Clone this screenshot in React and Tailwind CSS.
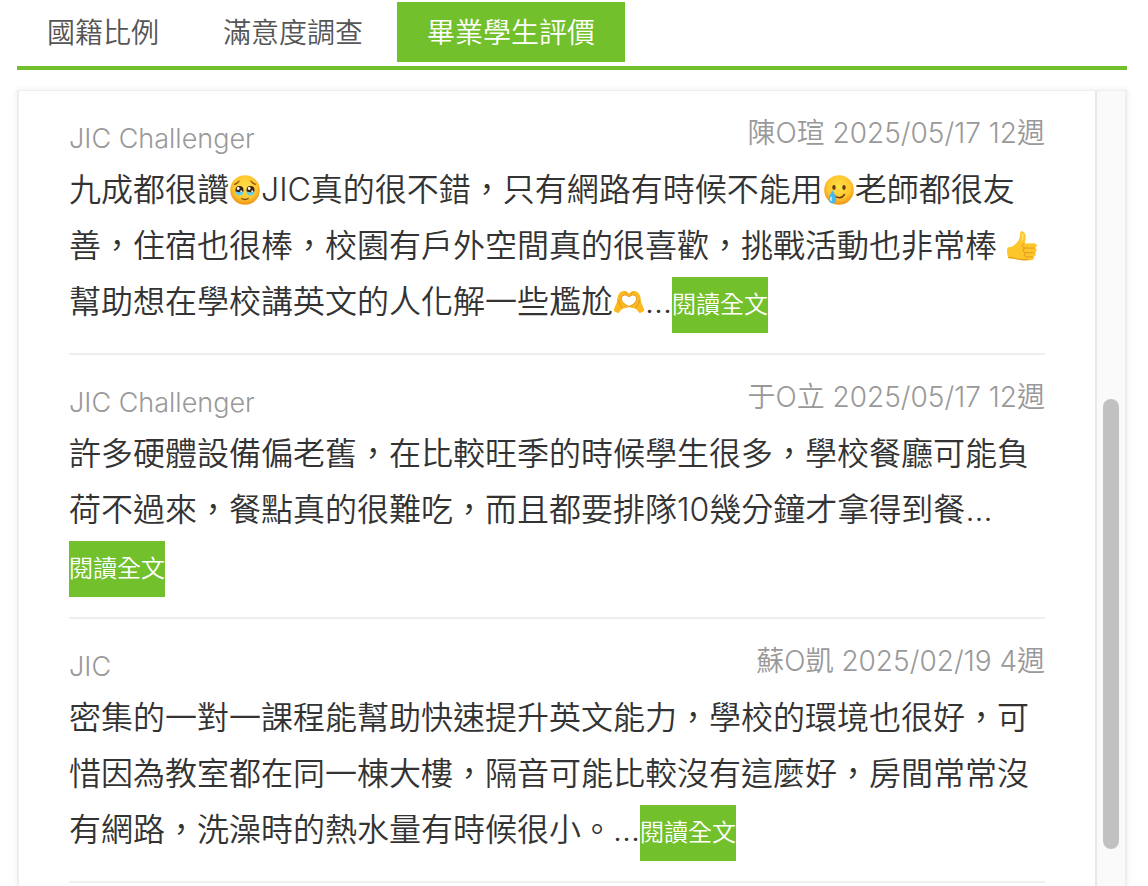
import { useState } from "react";

const TABS = ["國籍比例", "滿意度調查", "畢業學生評價"];

const REVIEWS = [
  {
    course: "JIC Challenger",
    author: "陳O瑄",
    date: "2025/05/17",
    weeks: "12週",
    content: (
      <>
        九成都很讚
        <TearyFace />
        JIC真的很不錯，只有網路有時候不能用
        <SmilingTear />
        老師都很友善，住宿也很棒，校園有戶外空間真的很喜歡，挑戰活動也非常棒{" "}
        <ThumbsUp />
        幫助想在學校講英文的人化解一些尷尬
        <HeartHands />
      </>
    ),
  },
  {
    course: "JIC Challenger",
    author: "于O立",
    date: "2025/05/17",
    weeks: "12週",
    content:
      "許多硬體設備偏老舊，在比較旺季的時候學生很多，學校餐廳可能負荷不過來，餐點真的很難吃，而且都要排隊10幾分鐘才拿得到餐",
  },
  {
    course: "JIC",
    author: "蘇O凱",
    date: "2025/02/19",
    weeks: "4週",
    content:
      "密集的一對一課程能幫助快速提升英文能力，學校的環境也很好，可惜因為教室都在同一棟大樓，隔音可能比較沒有這麼好，房間常常沒有網路，洗澡時的熱水量有時候很小。",
  },
];

function Emoji({ label, children }) {
  return (
    <svg
      role="img"
      aria-label={label}
      viewBox="0 0 32 32"
      className="mb-1 inline-block size-8 align-middle"
    >
      {children}
    </svg>
  );
}

function FaceBase({ id }) {
  return (
    <>
      <defs>
        <radialGradient id={id} cx="50%" cy="40%" r="60%">
          <stop offset="0" stopColor="#ffe04a" />
          <stop offset="0.65" stopColor="#ffc72e" />
          <stop offset="1" stopColor="#ee9418" />
        </radialGradient>
      </defs>
      <circle cx="16" cy="16" r="14.8" fill={`url(#${id})`} />
    </>
  );
}

function TearyFace() {
  return (
    <Emoji label="感動">
      <FaceBase id="teary-face" />
      <path
        d="M5.500 10.300q3-.8 4.500-3.200M26.500 10.300q-3-.8-4.500-3.200"
        fill="none"
        stroke="#8b5212"
        strokeWidth="1.200"
        strokeLinecap="round"
      />
      <ellipse cx="10.500" cy="16" rx="4" ry="3.900" fill="#3c2415" />
      <ellipse cx="21.500" cy="16" rx="4" ry="3.900" fill="#3c2415" />
      <path
        d="M6.500 17.200q4 2 8 0-.3 4.300-4 4.300t-4-4.300zM17.500 17.200q4 2 8 0-.3 4.300-4 4.300t-4-4.300z"
        fill="#63cfe8"
      />
      <circle cx="9.200" cy="14.500" r="1.400" fill="#fff" />
      <circle cx="20.200" cy="14.500" r="1.400" fill="#fff" />
      <circle cx="12.200" cy="17.200" r=".9" fill="#fff" />
      <circle cx="23.200" cy="17.200" r=".9" fill="#fff" />
      <path
        d="M12.800 24.500q3.200 2 6.400 0"
        fill="none"
        stroke="#7a430e"
        strokeWidth="1.400"
        strokeLinecap="round"
      />
    </Emoji>
  );
}

function SmilingTear() {
  return (
    <Emoji label="含淚微笑">
      <FaceBase id="smiling-tear" />
      <ellipse cx="11" cy="13.5" rx="1.7" ry="2.4" fill="#6b3a0c" />
      <ellipse cx="21" cy="13.5" rx="1.7" ry="2.4" fill="#6b3a0c" />
      <path
        d="M11 21.500q6.500 5 10.500-1"
        fill="none"
        stroke="#6b3a0c"
        strokeWidth="1.5"
        strokeLinecap="round"
      />
      <path
        d="M9.500 16.500q4 5.800 3.700 9-.5 4-3.700 4t-3.700-4q-.2-3.200 3.700-9z"
        fill="#45b9f0"
      />
      <path d="M8.400 22.800q-1.400 2.400.2 4" fill="none" stroke="#d3f2fd" strokeWidth="1.500" />
    </Emoji>
  );
}

function ThumbsUp() {
  return (
    <Emoji label="讚">
      <path
        d="M1.5 17.5q4.5-.6 7-2.6 4.2-3.6 5.3-7.4.4-2.2.3-4.6.1-2.2 2.3-1.6 3.6 1.3 3.2 6.8-.2 3-1 5.4l9.6-.3q2.6.2 2.5 2.3 0 2-1.8 2.4 2 .6 1.8 2.5-.2 1.8-2 2.2 1.3.7 1 2.2-.4 1.8-2.2 2 .8.8.4 1.8-.6 1.6-3.4 1.7-7.2.7-11.5-.7-3.5-1.1-7.5-.8-3 .2-3.8-3-1.2-4.4-.2-8.3z"
        fill="#fdc62b"
      />
      <path
        d="M18.3 13.5q-2 .8-2 2.6.2 1.8 2.6 1.9l10 .1M19 18q-2.2.4-2 2.3.2 2.2 2.8 2.4l8.3.1M19.8 22.8q-1.8.4-1.5 2 .3 1.9 2.6 2.1h5.8"
        fill="none"
        stroke="#e59a1c"
        strokeWidth="1"
        strokeLinecap="round"
      />
      <path
        d="M2 27.6q4-.2 8 1.1 4.8 1.4 11.6.7"
        fill="none"
        stroke="#e99a1b"
        strokeWidth="1.1"
      />
      <path d="M16.3 3.5q1.4 3-.5 7" fill="none" stroke="#ffe06a" strokeWidth="1.6" />
    </Emoji>
  );
}

// Two cupped hands with a heart-shaped opening between them
function HeartHands() {
  return (
    <Emoji label="愛心手勢">
      <path
        d="M16 7.500Q13 4.200 9.500 5.300 5.500 6.500 4.500 11.500L3.800 16.500.8 23.500q-.3 1.500.8 2l3.200 1.500q1 .3 1.600-1Q8 22.800 11 22.300q3.500-.3 5-1.300 1.500 1 5 1.300 3 .5 4.600 3.700.6 1.300 1.600 1l3.200-1.500q1.100-.5.800-2L28.200 16.500l-.7-5Q26.500 6.500 22.500 5.300 19 4.200 16 7.500z"
        fill="#fbb91f"
      />
      <path
        d="M16 10.600Q12.300 7.500 9.300 9.800 6.800 12.800 9.600 16.300 12 18.800 16 20.500q4-1.700 6.400-4.200 2.800-3.500.3-6.500Q19.700 7.500 16 10.600z"
        fill="#fff"
        stroke="#e5981a"
        strokeWidth="1"
      />
      <path
        d="M5.500 14q0 4.500 3.500 7.500M26.500 14q0 4.500-3.500 7.500M11.800 5.800q1.500.7 2 2M20.200 5.800q-1.500.7-2 2"
        fill="none"
        stroke="#e5981a"
        strokeWidth="1"
        strokeLinecap="round"
      />
    </Emoji>
  );
}

function Review({ review }) {
  return (
    <article className="border-b-2 border-[#eeeeee] pb-5">
      <header className="flex h-[71px] justify-between leading-[38px] text-[#999999]">
        <h3 className="pt-[29px] text-[27px]">{review.course}</h3>
        <p className="pt-[23px] text-[28px]">
          {review.author} <time>{review.date}</time> {review.weeks}
        </p>
      </header>
      <p className="text-[32px] leading-[56px] text-[#333333]">
        {review.content}...
        <a
          href="#full-review"
          className="inline-block bg-[#72c02c] text-2xl leading-[56px] text-white"
        >
          閱讀全文
        </a>
      </p>
    </article>
  );
}

export default function App() {
  const [activeTab, setActiveTab] = useState(2);

  return (
    <div className="flex h-screen flex-col overflow-hidden bg-white pt-0.5 pr-[21px] pl-[17px] font-['Inter','Noto_Sans_CJK_TC',sans-serif] font-[350]">
      {/* Tabs */}
      <nav
        role="tablist"
        className="flex shrink-0 gap-1 border-b-4 border-[#72c02c] pb-1"
      >
        {TABS.map((tab, index) => (
          <button
            key={tab}
            role="tab"
            aria-selected={activeTab === index}
            onClick={() => setActiveTab(index)}
            className={`h-[60px] px-[30px] pt-0.5 text-[28px] ${
              activeTab === index
                ? "bg-[#72c02c] text-white"
                : "text-[#555555]"
            }`}
          >
            {tab}
          </button>
        ))}
      </nav>

      {/* Review list */}
      <div className="mt-5 flex min-h-0 flex-1 border-x-2 border-t border-[#eeeeee] shadow-[0_0_6px_rgba(0,0,0,0.08)]">
        <div className="min-w-0 flex-1 overflow-hidden px-[50px]">
          {REVIEWS.map((review, index) => (
            <Review key={index} review={review} />
          ))}
        </div>

        {/* Scrollbar */}
        <div className="w-[30px] shrink-0 border-l-2 border-[#e8e8e8] bg-[#fafafa] px-1.5 pt-[308px]">
          <div className="h-[450px] w-4 rounded-full bg-[#c1c1c1]" />
        </div>
      </div>
    </div>
  );
}
